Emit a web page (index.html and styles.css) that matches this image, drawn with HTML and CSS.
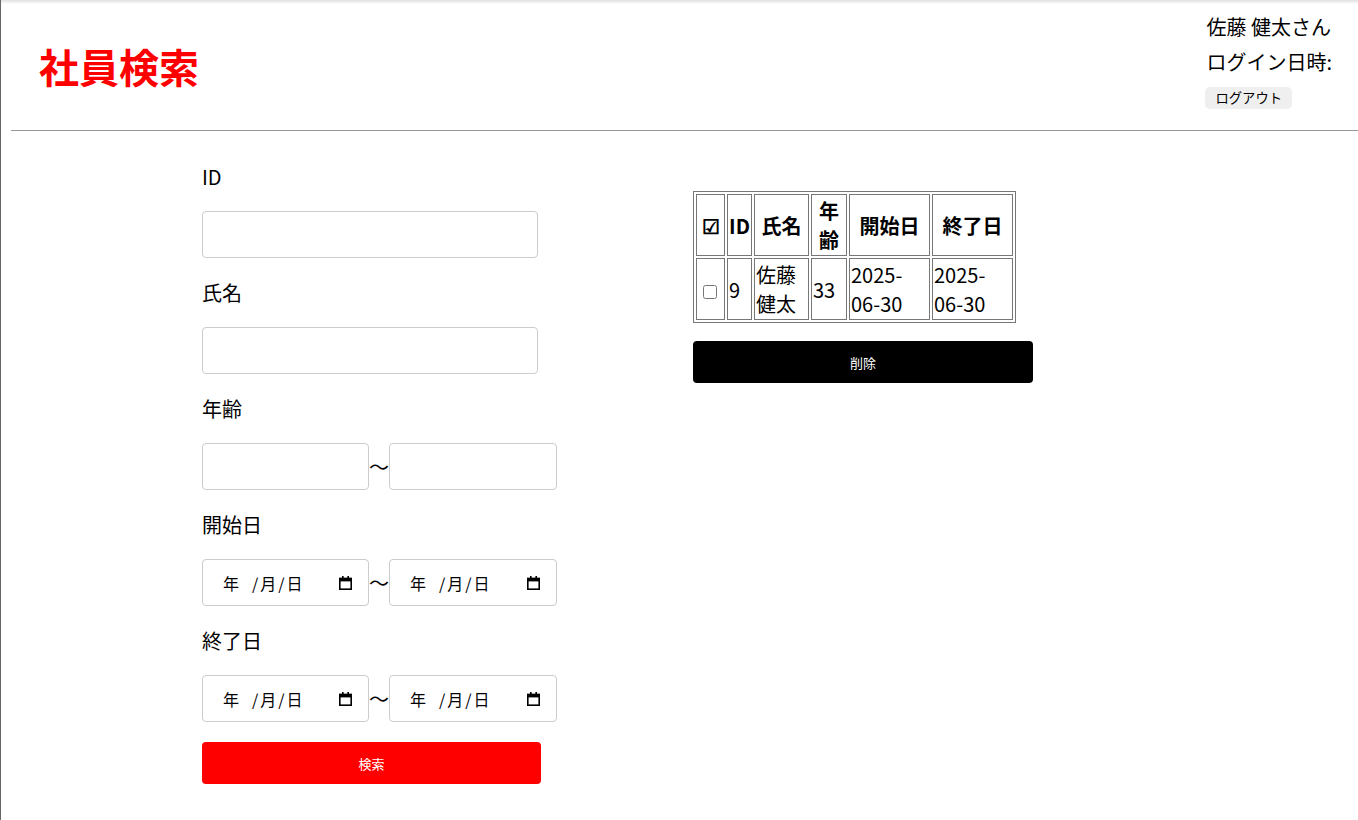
FILE: index.html
```html
<!DOCTYPE html>
<html lang="ja">
<head>
<meta charset="utf-8">
<title>社員検索</title>
<link rel="stylesheet" href="styles.css">
</head>
<body>
<header class="site-header">
  <h1 class="title">社員検索</h1>
  <div class="user">
    <div class="user-line">佐藤 健太さん</div>
    <div class="user-line">ログイン日時:</div>
    <button class="logout" type="button">ログアウト</button>
  </div>
</header>
<main class="main">
  <form class="search">
    <label class="field-label">ID</label>
    <input class="text-input" type="text">
    <label class="field-label">氏名</label>
    <input class="text-input" type="text">
    <label class="field-label">年齢</label>
    <div class="range">
      <input class="range-input" type="text">
      <span class="tilde">〜</span>
      <input class="range-input" type="text">
    </div>
    <label class="field-label">開始日</label>
    <div class="range">
      <div class="date-input"><span class="d-y">年</span><span class="d-sep">/</span><span>月</span><span class="d-sep">/</span><span>日</span><svg class="cal" width="13" height="14" viewBox="0 0 13 14"><rect x="3" y="0" width="1.6" height="2.5"/><rect x="8.4" y="0" width="1.6" height="2.5"/><rect x="0" y="1.8" width="13" height="3.6"/><rect x="0.8" y="2.6" width="11.4" height="10.6" fill="none" stroke="#000" stroke-width="1.6"/></svg></div>
      <span class="tilde">〜</span>
      <div class="date-input"><span class="d-y">年</span><span class="d-sep">/</span><span>月</span><span class="d-sep">/</span><span>日</span><svg class="cal" width="13" height="14" viewBox="0 0 13 14"><rect x="3" y="0" width="1.6" height="2.5"/><rect x="8.4" y="0" width="1.6" height="2.5"/><rect x="0" y="1.8" width="13" height="3.6"/><rect x="0.8" y="2.6" width="11.4" height="10.6" fill="none" stroke="#000" stroke-width="1.6"/></svg></div>
    </div>
    <label class="field-label">終了日</label>
    <div class="range">
      <div class="date-input"><span class="d-y">年</span><span class="d-sep">/</span><span>月</span><span class="d-sep">/</span><span>日</span><svg class="cal" width="13" height="14" viewBox="0 0 13 14"><rect x="3" y="0" width="1.6" height="2.5"/><rect x="8.4" y="0" width="1.6" height="2.5"/><rect x="0" y="1.8" width="13" height="3.6"/><rect x="0.8" y="2.6" width="11.4" height="10.6" fill="none" stroke="#000" stroke-width="1.6"/></svg></div>
      <span class="tilde">〜</span>
      <div class="date-input"><span class="d-y">年</span><span class="d-sep">/</span><span>月</span><span class="d-sep">/</span><span>日</span><svg class="cal" width="13" height="14" viewBox="0 0 13 14"><rect x="3" y="0" width="1.6" height="2.5"/><rect x="8.4" y="0" width="1.6" height="2.5"/><rect x="0" y="1.8" width="13" height="3.6"/><rect x="0.8" y="2.6" width="11.4" height="10.6" fill="none" stroke="#000" stroke-width="1.6"/></svg></div>
    </div>
    <button class="search-btn" type="button">検索</button>
  </form>
  <section class="results">
    <table class="result-table">
      <thead>
        <tr>
          <th class="c-check">☑</th>
          <th class="c-id">ID</th>
          <th class="c-name">氏名</th>
          <th class="c-age">年齢</th>
          <th class="c-date">開始日</th>
          <th class="c-date">終了日</th>
        </tr>
      </thead>
      <tbody>
        <tr>
          <td><input class="row-check" type="checkbox"></td>
          <td>9</td>
          <td>佐藤健太</td>
          <td>33</td>
          <td>2025-06-30</td>
          <td>2025-06-30</td>
        </tr>
      </tbody>
    </table>
    <button class="delete-btn" type="button">削除</button>
  </section>
</main>
</body>
</html>
```
FILE: styles.css
```css
* {
  box-sizing: border-box;
}

html,
body {
  margin: 0;
  padding: 0;
}

body {
  font-family: "Noto Sans CJK JP", "Noto Sans", sans-serif;
  color: #000;
  background: #fff;
}

body::before {
  content: "";
  position: fixed;
  top: 0;
  left: 0;
  right: 0;
  height: 4px;
  background: linear-gradient(rgba(0, 0, 0, 0.12), rgba(0, 0, 0, 0));
  pointer-events: none;
}

body::after {
  content: "";
  position: fixed;
  top: 0;
  bottom: 0;
  left: 0;
  width: 1px;
  background: #666;
  pointer-events: none;
}

/* Header */
.site-header {
  display: flex;
  justify-content: space-between;
  align-items: flex-start;
  height: 131px;
  margin-left: 11px;
  padding: 0 26px 0 28px;
  border-bottom: 1px solid #999;
}

.title {
  margin: 37px 0 0;
  font-size: 40px;
  line-height: 58px;
  font-weight: 700;
  color: #ff0000;
}

.user {
  padding-top: 9px;
  padding-left: 1px;
  font-size: 20px;
  line-height: 35px;
}

.user-line {
  white-space: nowrap;
}

.logout {
  display: block;
  margin-top: 8px;
  margin-left: -1px;
  height: 22px;
  padding: 0 10px;
  border: 0;
  border-radius: 5px;
  background: #efefef;
  color: #000;
  font-family: "Noto Sans CJK JP", sans-serif;
  font-size: 13.33px;
  line-height: 22px;
}

/* Main */
.main {
  display: flex;
  align-items: flex-start;
  gap: 136px;
  padding: 31px 0 0 202px;
}

.search {
  width: 355px;
  display: flex;
  flex-direction: column;
  align-items: flex-start;
}

.field-label {
  display: block;
  font-size: 20px;
  line-height: 29px;
  margin-bottom: 20px;
}

.text-input,
.range-input {
  height: 47px;
  border: 1px solid #ccc;
  border-radius: 4px;
  padding: 0 12px;
  font-size: 16px;
  font-family: inherit;
  background: #fff;
}

.text-input {
  width: 336px;
  margin-bottom: 20px;
}

.range-input {
  width: 167px;
}

.range-input + .tilde + .range-input {
  width: 168px;
}

.range {
  display: flex;
  align-items: center;
  margin-bottom: 20px;
}

.tilde {
  width: 20px;
  font-size: 20px;
  line-height: 29px;
  text-align: center;
}

.date-input {
  display: flex;
  align-items: center;
  width: 167px;
  height: 47px;
  border: 1px solid #ccc;
  border-radius: 4px;
  padding: 0 16px 0 20px;
  font-size: 16px;
  line-height: 20px;
  background: #fff;
}

.tilde + .date-input {
  width: 168px;
}

.d-y {
  margin-right: 11px;
}

.d-sep {
  padding: 0 2px;
}

.cal {
  margin-left: auto;
  fill: #000;
}

.search-btn {
  width: 339px;
  height: 42px;
  border: 0;
  border-radius: 4px;
  background: #ff0000;
  color: #fff;
  font-family: "Noto Sans CJK JP", sans-serif;
  font-size: 13px;
}

/* Results */
.results {
  width: 340px;
  padding-top: 29px;
}

.result-table {
  table-layout: fixed;
  width: 323px;
  border-collapse: separate;
  border-spacing: 2px;
  border: 1px solid #777;
  font-size: 20px;
  line-height: 29px;
  margin-bottom: 18px;
}

.result-table th,
.result-table td {
  border: 1px solid #777;
  padding: 1px;
}

.result-table th {
  font-weight: 700;
  text-align: center;
}

.result-table td {
  text-align: left;
}

.c-check { width: 29px; }
.c-id { width: 25px; }
.c-name { width: 55px; }
.c-age { width: 36px; }
.c-date { width: 81px; }

.row-check {
  width: 14px;
  height: 14px;
  margin: 3px 3px 3px 5px;
  vertical-align: middle;
}

.delete-btn {
  display: block;
  width: 340px;
  height: 42px;
  border: 0;
  border-radius: 4px;
  background: #000;
  color: #fff;
  font-family: "Noto Sans CJK JP", sans-serif;
  font-size: 13px;
}
```
